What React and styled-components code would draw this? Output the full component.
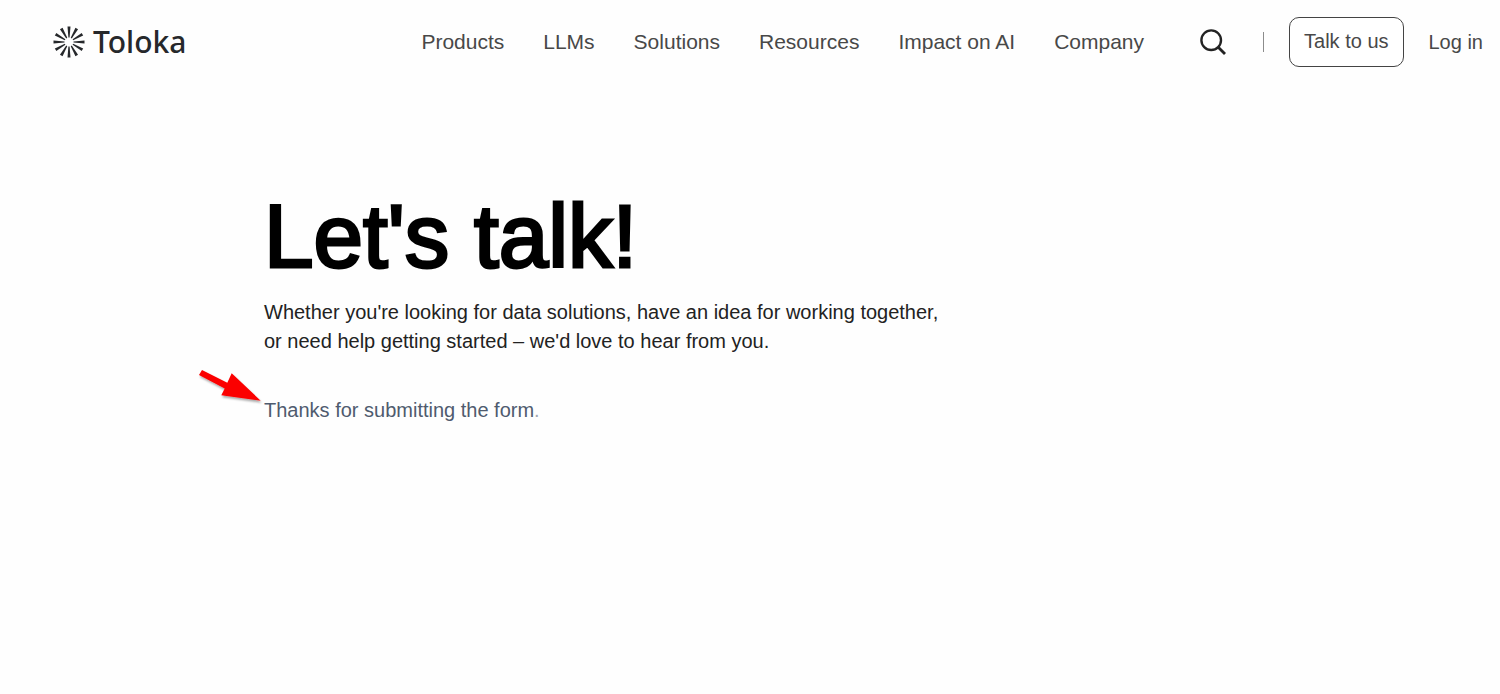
import React from "react";
import styled, { createGlobalStyle } from "styled-components";

const GlobalStyle = createGlobalStyle`
  *, *::before, *::after { box-sizing: border-box; }
  body {
    margin: 0;
    background: #fefefe;
    color: #222;
    font-family: "Liberation Sans", Arial, sans-serif;
    font-size: 20px;
  }
`;

const Header = styled.header`
  display: flex;
  align-items: center;
  padding: 17px 17px 17px 53px;
`;

const Brand = styled.a`
  display: flex;
  align-items: center;
  gap: 8px;
  color: #26282b;
  font-family: "Noto Sans", sans-serif;
  font-size: 30px;
  font-weight: 500;
  line-height: 50px;
  text-decoration: none;
`;

const Nav = styled.nav`
  display: flex;
  gap: 39px;
  margin-left: auto;
`;

const NavLink = styled.a`
  color: #484848;
  font-size: ${(p) => (p.$small ? 20 : 21)}px;
  line-height: 24px;
  text-decoration: none;
  white-space: nowrap;
`;

const Actions = styled.div`
  display: flex;
  align-items: center;
  gap: 25px;
  margin-left: 56px;
`;

const SearchButton = styled.button`
  display: flex;
  margin-right: 12px;
  padding: 0;
  border: 0;
  background: none;
  color: #222;
`;

const Divider = styled.span`
  width: 1px;
  height: 20px;
  background: #8c8c8c;
`;

const TalkButton = styled.button`
  height: 50px;
  padding: 0 14px 2px;
  border: 1px solid #444;
  border-radius: 10px;
  background: #fff;
  color: #484848;
  font: inherit;
  white-space: nowrap;
`;

const Main = styled.main`
  padding: 98px 24px 80px 264px;
`;

const Title = styled.h1`
  margin: 0;
  color: #000;
  font-size: 89px;
  font-weight: 400;
  line-height: 108px;
  -webkit-text-stroke: 3px #000;
`;

const Lead = styled.p`
  max-width: 688px;
  margin: 8px 0 0;
  line-height: 29px;
`;

const Status = styled.p`
  position: relative;
  margin: 40px 0 0;
  color: #4f5b6e;
  line-height: 29px;
`;

const Stop = styled.span`
  color: #a3a8b0;
`;

const Pointer = styled.svg`
  position: absolute;
  left: -68px;
  top: -29px;
`;

const rays = Array.from({ length: 12 }, (_, i) => i * 30);

function Burst() {
  return (
    <svg width="32" height="32" viewBox="-16 -16 32 32" aria-hidden="true">
      {rays.map((a) => (
        <path key={a} d="M-0.6 -4.5 L-1.5 -15.5 H1.5 L0.6 -4.5 Z" fill="#26282b" transform={`rotate(${a})`} />
      ))}
    </svg>
  );
}

const links = ["Products", "LLMs", "Solutions", "Resources", "Impact on AI", "Company"];

export default function App() {
  return (
    <>
      <GlobalStyle />
      <Header>
        <Brand href="#">
          <Burst />
          Toloka
        </Brand>
        <Nav>
          {links.map((l) => (
            <NavLink key={l} href="#">{l}</NavLink>
          ))}
        </Nav>
        <Actions>
          <SearchButton aria-label="Search">
            <svg width="26" height="26" viewBox="0 0 26 26" fill="none" stroke="currentColor" strokeWidth="2.4">
              <circle cx="11.2" cy="11.2" r="9.8" />
              <path d="M18 18 L25 25" strokeWidth="2.8" />
            </svg>
          </SearchButton>
          <Divider />
          <TalkButton>Talk to us</TalkButton>
          <NavLink href="#" $small>Log in</NavLink>
        </Actions>
      </Header>
      <Main>
        <Title>Let's talk!</Title>
        <Lead>
          Whether you're looking for data solutions, have an idea for working together,
          or need help getting started – we'd love to hear from you.
        </Lead>
        <Status role="status">
          <Pointer width="68" height="42" viewBox="0 0 68 42" aria-hidden="true">
            <defs>
              <filter id="soft" x="-20%" y="-20%" width="140%" height="150%">
                <feDropShadow dx="1" dy="2" stdDeviation="1" floodOpacity="0.35" />
              </filter>
            </defs>
            <path d="M6 3 L31.3 15.7 L35.7 6.3 L64.7 33.7 L25.3 28.3 L28.7 21.5 L3 8 Z" fill="#fb0505" filter="url(#soft)" />
          </Pointer>
          Thanks for submitting the form<Stop>.</Stop>
        </Status>
      </Main>
    </>
  );
}
